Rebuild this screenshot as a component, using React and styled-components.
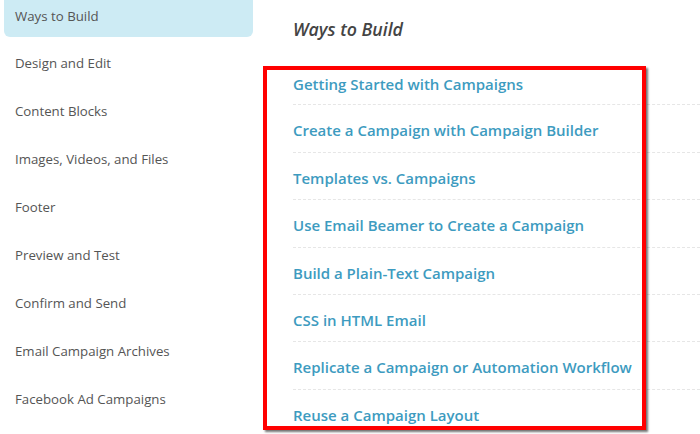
import React from 'react';
import styled, { createGlobalStyle } from 'styled-components';

const GlobalStyle = createGlobalStyle`
  html, body {
    margin: 0;
    padding: 0;
    background: #fff;
  }
  body {
    font-family: "Open Sans", "Liberation Sans", sans-serif;
  }
`;

const Page = styled.div`
  display: flex;
  width: 700px;
  height: 434px;
  overflow: hidden;
  position: relative;
`;

const Sidebar = styled.nav`
  width: 249px;
  margin-left: 4px;
  flex-shrink: 0;
  display: flex;
  flex-direction: column;
`;

const NavItem = styled.div`
  height: 48px;
  box-sizing: border-box;
  padding: 5px 11px 0;
  font-size: 13.25px;
  line-height: 20px;
  color: #555;
  background: ${p => (p.active ? '#cdebf4' : 'transparent')};
  border-radius: 0 0 6px 6px;
  ${p => p.active && 'height: 37px; margin-bottom: 11px; padding-top: 6px;'}
`;

const Main = styled.main`
  flex: 1;
  padding: 15px 0 0 40px;
`;

const Title = styled.h2`
  margin: 0 0 15px;
  font-size: 17.75px;
  line-height: 28px;
  font-style: italic;
  font-weight: 600;
  color: #444;
`;

const LinkList = styled.ul`
  list-style: none;
  margin: 0;
  padding: 0;
`;

const LinkRow = styled.li`
  height: 47.4px;
  box-sizing: border-box;
  padding-top: ${p => (p.first ? 15 : 14)}px;
  border-bottom: 1px dashed ${p => (p.last ? 'transparent' : '#e6e6e6')};
`;

const Link = styled.a`
  font-size: 15px;
  line-height: 20px;
  font-weight: 600;
  color: #3d9bc0;
  text-decoration: none;
`;

const Highlight = styled.div`
  position: absolute;
  left: 263px;
  top: 66px;
  width: 375px;
  height: 356px;
  border: 4px solid #f00;
  box-shadow: 2px 2px 2px rgba(0, 0, 0, 0.55);
  pointer-events: none;
`;

const sections = [
  'Ways to Build',
  'Design and Edit',
  'Content Blocks',
  'Images, Videos, and Files',
  'Footer',
  'Preview and Test',
  'Confirm and Send',
  'Email Campaign Archives',
  'Facebook Ad Campaigns',
];

const links = [
  'Getting Started with Campaigns',
  'Create a Campaign with Campaign Builder',
  'Templates vs. Campaigns',
  'Use Email Beamer to Create a Campaign',
  'Build a Plain-Text Campaign',
  'CSS in HTML Email',
  'Replicate a Campaign or Automation Workflow',
  'Reuse a Campaign Layout',
];

export default function App() {
  return (
    <>
      <GlobalStyle />
      <Page>
        <Sidebar>
          {sections.map((s, i) => (
            <NavItem key={s} active={i === 0}>{s}</NavItem>
          ))}
        </Sidebar>
        <Main>
          <Title>Ways to Build</Title>
          <LinkList>
            {links.map((l, i) => (
              <LinkRow key={l} first={i === 0} last={i === links.length - 1}>
                <Link href="#">{l}</Link>
              </LinkRow>
            ))}
          </LinkList>
        </Main>
        <Highlight />
      </Page>
    </>
  );
}
